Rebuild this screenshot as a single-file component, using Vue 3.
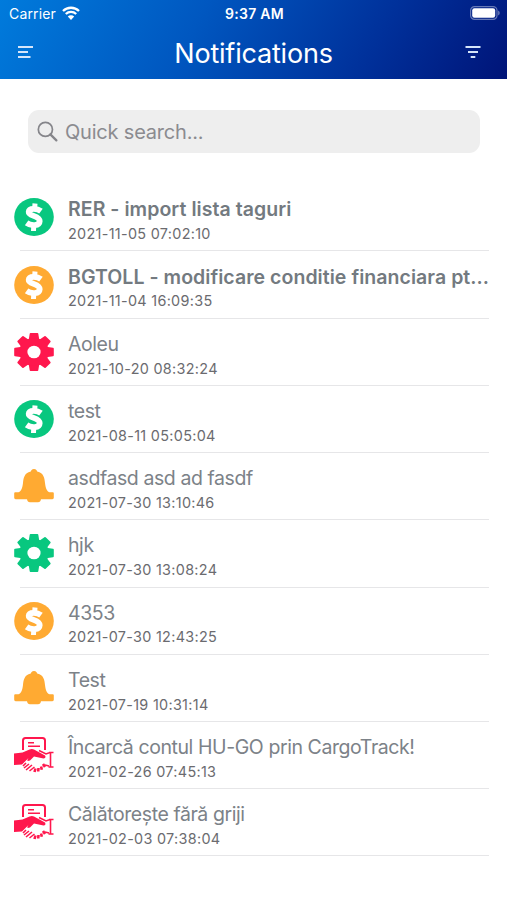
<template>
  <div class="screen">
    <header class="header">
      <div class="status">
        <div class="carrier">
          <span>Carrier</span>
          <svg class="wifi" viewBox="0 0 18 14" aria-hidden="true">
            <path d="M1 5a11.5 11.5 0 0 1 16 0M3.8 8a7.5 7.5 0 0 1 10.4 0" fill="none" stroke="#fff" stroke-width="2.3" />
            <path d="M9 14L5.8 10.6a4.6 4.6 0 0 1 6.4 0z" fill="#fff" />
          </svg>
        </div>
        <span class="clock">9:37 AM</span>
        <svg class="battery" viewBox="0 0 30 14" aria-hidden="true">
          <rect x="0.6" y="0.6" width="26.4" height="12.8" rx="4" fill="none" stroke="#fff" stroke-opacity=".4" stroke-width="1.2" />
          <rect x="2.2" y="2.2" width="23" height="9.6" rx="2.2" fill="#fff" />
          <path d="M28.2 4.6q1.5.7 1.5 2.4t-1.5 2.4z" fill="#fff" fill-opacity=".45" />
        </svg>
      </div>
      <div class="bar">
        <button class="icon-btn" aria-label="Menu">
          <svg viewBox="0 0 16 14"><path d="M1 2h15M1 7h10M1 12h12.5" /></svg>
        </button>
        <h1>Notifications</h1>
        <button class="icon-btn" aria-label="Filter">
          <svg viewBox="0 0 16 14"><path d="M.5 2h15M3 7h10M5.7 12h4.6" /></svg>
        </button>
      </div>
    </header>

    <label class="search">
      <svg viewBox="0 0 22 22" aria-hidden="true">
        <circle cx="8.8" cy="8.8" r="7.4" fill="none" stroke="#85858a" stroke-width="1.8" />
        <path d="M14 14l6.3 6.3" stroke="#85858a" stroke-width="2.4" stroke-linecap="round" />
      </svg>
      <input v-model="query" type="text" placeholder="Quick search..." />
    </label>

    <ul class="list">
      <li v-for="n in filtered" :key="n.date" class="row" :class="{ unread: n.unread }">
        <svg class="icon" :class="n.color" viewBox="0 0 40 38" aria-hidden="true">
          <template v-if="n.icon === 'money'">
            <ellipse cx="20" cy="19" rx="19.8" ry="19" fill="currentColor" />
            <g fill="none" stroke="#fff">
              <path d="M27 13.1C23.5 10.5 15 9.6 14.7 13.9C14.4 18.4 25.9 17.4 25.7 23.2C25.5 28.2 17.2 28.3 12.6 24.9" stroke-width="5.8" />
              <path d="M21 5.5L20.6 12M19.8 27L19.5 33" stroke-width="5" />
            </g>
          </template>
          <template v-else-if="n.icon === 'gear'">
            <g fill="currentColor" transform="translate(20 19) scale(1 .96)">
              <path v-for="a in 8" :key="a" d="M-5.4-12L-4.3-19a1 1 0 0 1 1-.8h6.6a1 1 0 0 1 1 .8L5.4-12z" :transform="`rotate(${a * 45})`" />
              <circle r="14.7" />
              <circle r="6.6" fill="#fff" />
            </g>
          </template>
          <template v-else-if="n.icon === 'bell'">
            <path fill="currentColor" d="M20 2c2.2 0 3 1.6 3.2 2.5C30 6 30.5 11.5 31 16c.6 6 2.5 8.8 4.6 9.3h3.2q1 0 1 1v4.500q0 1.400-1.400 1.400H27c-.3 2-1.300 3-3 3h-8c-1.700 0-2.700-1-3-3H1.600q-1.400 0-1.400-1.400v-4.500q0-1 1-1h3.200C6.500 24.800 8.400 22 9 16c.5-4.500 1-10 7.800-11.500C17 3.600 17.800 2 20 2z" />
          </template>
          <template v-else>
            <g fill="none" stroke="currentColor" stroke-width="1.6">
              <path d="M9 14V4.500Q9 2 11.500 2H28.500Q31 2 31 4.500V14" stroke-width="2" />
              <path d="M14 6.800h6M14 10.300h12" />
              <path d="M25 14.500L32 18l4-1.500M35 16.500h4.500M36.500 16.500v14M34.500 31h5M35 30l-4-1" />
              <path d="M12 27l-3 3M15 28l-5 4M18 29l-6 5M20.500 31l-5 4" stroke-width="1.6" />
              <path d="M20.500 36l1-3.500M24.200 35.500l.3-3.500M27.800 33.800l-.7-3.300M31 31l-2-3" stroke-width="2.6" />
            </g>
            <path fill="currentColor" d="M0 17.5L8.500 16.500 15.500 13.500Q18 12.500 20 13.500L31 19.500Q32.500 22 29.500 22.500L20 20.500 16 24.500Q11.500 26 14.500 22L8 28.500 0 29z" />
          </template>
        </svg>
        <div class="body">
          <div class="title">{{ n.title }}</div>
          <div class="date">{{ n.date }}</div>
        </div>
      </li>
    </ul>
  </div>
</template>

<script setup>
import { ref, computed } from 'vue'

const query = ref('')

const notifications = [
  { title: 'RER - import lista taguri', date: '2021-11-05 07:02:10', icon: 'money', color: 'green', unread: true },
  { title: 'BGTOLL - modificare conditie financiara pt...', date: '2021-11-04 16:09:35', icon: 'money', color: 'orange', unread: true },
  { title: 'Aoleu', date: '2021-10-20 08:32:24', icon: 'gear', color: 'red' },
  { title: 'test', date: '2021-08-11 05:05:04', icon: 'money', color: 'green' },
  { title: 'asdfasd asd ad fasdf', date: '2021-07-30 13:10:46', icon: 'bell', color: 'orange' },
  { title: 'hjk', date: '2021-07-30 13:08:24', icon: 'gear', color: 'green' },
  { title: '4353', date: '2021-07-30 12:43:25', icon: 'money', color: 'orange' },
  { title: 'Test', date: '2021-07-19 10:31:14', icon: 'bell', color: 'orange' },
  { title: 'Încarcă contul HU-GO prin CargoTrack!', date: '2021-02-26 07:45:13', icon: 'deal', color: 'red' },
  { title: 'Călătorește fără griji', date: '2021-02-03 07:38:04', icon: 'deal', color: 'red' },
]

const filtered = computed(() =>
  notifications.filter(n => n.title.toLowerCase().includes(query.value.toLowerCase()))
)
</script>

<style>
body { margin: 0; background: #fff; }
</style>

<style scoped>
.screen { width: 100%; height: 900px; overflow: hidden; background: #fff; font-family: Inter, "Noto Sans", sans-serif; box-sizing: border-box; }
.header { height: 79px; color: #fff; background: linear-gradient(120deg, #007bdc 0%, #0057c0 38%, #00309a 73%, #001478 100%); }
.status { height: 28px; padding: 0 7px 0 9px; display: grid; grid-template-columns: 1fr auto 1fr; align-items: center; font-size: 14px; }
.carrier { display: flex; align-items: center; gap: 6px; letter-spacing: .15px; margin-top: -1px; }
.wifi { width: 18px; height: 14px; margin-top: -1px; }
.clock { font-weight: 600; font-size: 14px; letter-spacing: .25px; margin-top: -1px; }
.battery { width: 30px; height: 14px; justify-self: end; margin-top: -2px; }
.bar { height: 48px; padding: 0 26px 0 17px; display: grid; grid-template-columns: 16px 1fr 16px; align-items: center; }
.bar h1 { margin: 2px 0 0 9px; text-align: center; font-size: 27px; font-weight: 400; letter-spacing: -.2px; }
.icon-btn { width: 16px; height: 14px; padding: 0; border: 0; background: none; display: block; }
.icon-btn svg { display: block; width: 16px; height: 14px; fill: none; stroke: #d5e5fa; stroke-width: 1.8; }

.search { display: flex; align-items: center; gap: 7px; margin: 31px 27px 0 28px; height: 43px; padding: 0 9px; border-radius: 11px; background: #eee; box-sizing: border-box; }
.search svg { width: 21px; height: 21px; flex: none; }
.search input { flex: 1; min-width: 0; padding: 0; border: 0; outline: 0; background: none; font: 400 20px Inter, sans-serif; color: #555; letter-spacing: -.2px; }
.search input::placeholder { color: #8b8b90; opacity: 1; }

.list { list-style: none; margin: 31.2px 0 0; padding: 0 18px 0 14px; }
.row { display: flex; height: 67.22px; gap: 14px; background: linear-gradient(#e6e6e8, #e6e6e8) 6px 100% / calc(100% - 6px) 1px no-repeat; }
.icon { width: 40px; height: 38px; flex: none; margin-top: 14.2px; }
.green { color: #08c77f; }
.orange { color: #ffaa32; }
.red { color: #ff174d; }
.body { min-width: 0; padding-top: 12.2px; }
.title { font-size: 19.5px; line-height: 26px; letter-spacing: -.42px; color: #7c8288; white-space: nowrap; }
.unread .title { font-weight: 600; letter-spacing: .05px; color: #737a80; }
.date { margin-top: 2.8px; font-size: 14.4px; line-height: 18px; color: #6b6b6f; white-space: nowrap; letter-spacing: .31px; }
</style>
